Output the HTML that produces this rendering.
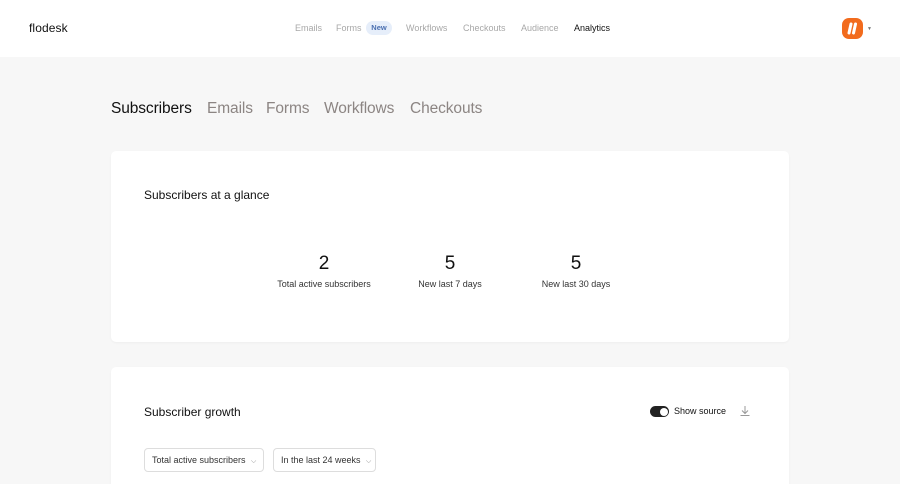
<!DOCTYPE html>
<html><head><style>
*{margin:0;padding:0;box-sizing:border-box}
html,body{width:900px;height:484px;overflow:hidden}
body{background:#f7f7f7;font-family:"Liberation Sans",sans-serif;color:#111;position:relative}
.hdr{position:absolute;left:0;top:0;width:900px;height:57px;background:#fff}
.logo{position:absolute;left:29px;top:21px;font-size:12px;letter-spacing:0.1px}
.nav{position:absolute;top:23px;font-size:9px;color:#a8a8a8}
.badge{position:absolute;left:366px;top:21px;width:26px;height:14px;border-radius:7px;background:#e6eefa;color:#4a6fb0;font-size:7.5px;font-weight:bold;text-align:center;line-height:14px}
.av{position:absolute;left:842px;top:18px;width:21px;height:21px;border-radius:7px;background:#f26b1d}
.tabs{position:absolute;top:100px;font-size:15.5px;color:#8c8583;letter-spacing:-0.1px}
.card{position:absolute;left:111px;width:678px;background:#fff;border-radius:5px;box-shadow:0 1px 2px rgba(0,0,0,.04)}
.h{position:absolute;left:33px;font-size:12px}
.stat{position:absolute;top:103px;width:140px;text-align:center}
.stat b{display:block;font-size:19px;font-weight:400;line-height:20px}
.stat span{font-size:9px;color:#333}
.sel{position:absolute;top:81px;height:24px;border:1px solid #ddd;border-radius:4px;font-size:9px;line-height:22px;padding-left:7px;color:#333}
</style></head><body>
<div class="hdr">
<div class="logo">flodesk</div>
<div class="nav" style="left:295px">Emails</div>
<div class="nav" style="left:336px">Forms</div>
<div class="badge">New</div>
<div class="nav" style="left:406px">Workflows</div>
<div class="nav" style="left:463px">Checkouts</div>
<div class="nav" style="left:521px">Audience</div>
<div class="nav" style="left:574px;color:#111">Analytics</div>
<div class="av"><svg width="21" height="21" viewBox="0 0 21 21"><path d="M7 15 L9 6 M11.5 15 L13.5 6" stroke="#fff" stroke-width="3" stroke-linecap="round"/></svg></div>
<div style="position:absolute;left:867px;top:26px;font-size:5px;color:#777">▼</div>
</div>
<div class="tabs" style="left:111px;color:#111">Subscribers</div>
<div class="tabs" style="left:207px">Emails</div>
<div class="tabs" style="left:266px">Forms</div>
<div class="tabs" style="left:324px">Workflows</div>
<div class="tabs" style="left:410px">Checkouts</div>
<div class="card" style="top:151px;height:191px">
<div class="h" style="top:37px">Subscribers at a glance</div>
<div class="stat" style="left:143px"><b>2</b><span>Total active subscribers</span></div>
<div class="stat" style="left:269px"><b>5</b><span>New last 7 days</span></div>
<div class="stat" style="left:395px"><b>5</b><span>New last 30 days</span></div>
</div>
<div class="card" style="top:367px;height:140px">
<div class="h" style="top:38px">Subscriber growth</div>
<div style="position:absolute;left:539px;top:39px;width:19px;height:11px;border-radius:6px;background:#222"><div style="position:absolute;right:1.5px;top:1.5px;width:8px;height:8px;border-radius:50%;background:#fff"></div></div>
<div style="position:absolute;left:563px;top:39px;font-size:9px">Show source</div>
<svg style="position:absolute;left:628px;top:38px" width="12" height="12" viewBox="0 0 12 12"><path d="M6 1V8M3 5.5L6 8.5L9 5.5M1.5 10.5H10.5" stroke="#999" fill="none" stroke-width="1"/></svg>
<div class="sel" style="left:33px;width:120px">Total active subscribers <span style="color:#888;font-size:7px;margin-left:3px">⌵</span></div>
<div class="sel" style="left:162px;width:103px">In the last 24 weeks <span style="color:#888;font-size:7px;margin-left:3px">⌵</span></div>
</div>
</body></html>
